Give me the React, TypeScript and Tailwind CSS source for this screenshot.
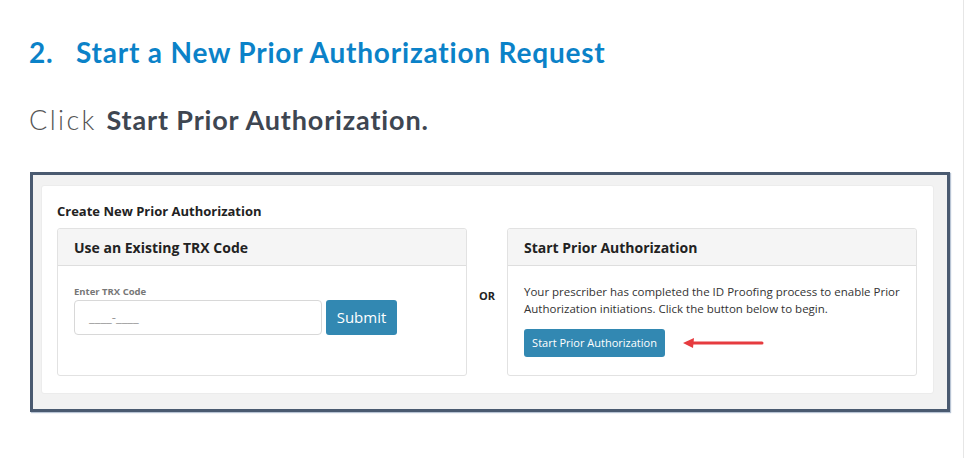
import React from "react";

const ui = { fontFamily: '"Open Sans", "Liberation Sans", sans-serif' };
const doc = { fontFamily: 'Lato, "Liberation Sans", sans-serif' };

function PanelHeader({ title }: { title: string }) {
  return (
    <div className="h-[37px] flex items-center px-[16px] bg-[#f5f5f5] border-b border-[#dedede] rounded-t-[3px]">
      <span className="text-[14px] font-bold text-[#222]">{title}</span>
    </div>
  );
}

function ArrowLeft() {
  return (
    <svg width="82" height="12" viewBox="0 0 82 12" className="ml-[17px]">
      <path d="M10 6 H80" stroke="#e63b3f" strokeWidth="3" strokeLinecap="round" />
      <path d="M1 6 L12 1 L11 11 Z" fill="#e63b3f" />
    </svg>
  );
}

export default function App() {
  return (
    <div className="w-[964px] min-h-[458px] bg-white border-r border-[#e6e6e6]">
      {/* step title */}
      <div style={doc} className="flex items-center pt-[33px] pl-[29px] h-[70px] text-[28px] font-bold text-[#0b82c8] tracking-[0.8px]">
        <span className="w-[47px]">2.</span>
        <span>Start a New Prior Authorization Request</span>
      </div>

      <div style={doc} className="pl-[29px] mt-[34px] text-[27px] leading-[32px] text-[#3e4651]">
        <span className="font-light text-[#555] tracking-[2.4px]">Click </span>
        <span className="font-bold tracking-[0.85px]">Start Prior Authorization.</span>
      </div>

      {/* screenshot frame */}
      <div className="ml-[30px] mt-[36px] w-[920px] h-[240px] border-[3px] border-[#4a5a70] bg-[#f2f2f2] shadow-[1px_1px_1px_#b8c4d4] pt-[10px] pl-[8px] pr-[13px] pb-[15px]">
        <div style={ui} className="h-full bg-white rounded-[3px] border border-[#ececec] px-[15px]">
          <div className="h-[42px] pt-[16px] text-[13px] font-bold text-[#222] leading-[18px]">
            Create New Prior Authorization
          </div>

          <div className="flex">
            {/* left panel */}
            <div className="w-[410px] h-[148px] border border-[#e2e2e2] rounded-[3px]">
              <PanelHeader title="Use an Existing TRX Code" />
              <div className="pl-[16px] pt-[20px]">
                <div className="text-[9.5px] font-bold text-[#777] leading-[12px]">Enter TRX Code</div>
                <div className="flex items-center gap-[4px] mt-[2px]">
                  <div className="w-[248px] h-[35px] border border-[#d8d8d8] rounded-[4px] flex items-center pl-[14px] text-[13px] text-[#999]">
                    ____-____
                  </div>
                  <button className="w-[71px] h-[35px] bg-[#3288b2] rounded-[3px] text-white text-[15px]">
                    Submit
                  </button>
                </div>
              </div>
            </div>

            {/* or */}
            <div className="w-[40px] flex items-center justify-center pb-[12px] text-[11px] font-bold text-[#222]">
              OR
            </div>

            {/* right panel */}
            <div className="w-[410px] h-[148px] border border-[#e2e2e2] rounded-[3px]">
              <PanelHeader title="Start Prior Authorization" />
              <div className="pl-[16px] pt-[17px] pr-[12px]">
                <p className="text-[11.5px] leading-[17px] text-[#333]">
                  Your prescriber has completed the ID Proofing process to enable Prior
                  Authorization initiations. Click the button below to begin.
                </p>
                <div className="flex items-center mt-[12px]">
                  <button className="w-[141px] h-[28px] bg-[#3288b2] rounded-[3px] text-white text-[11px]">
                    Start Prior Authorization
                  </button>
                  <ArrowLeft />
                </div>
              </div>
            </div>
          </div>
        </div>
      </div>
    </div>
  );
}
